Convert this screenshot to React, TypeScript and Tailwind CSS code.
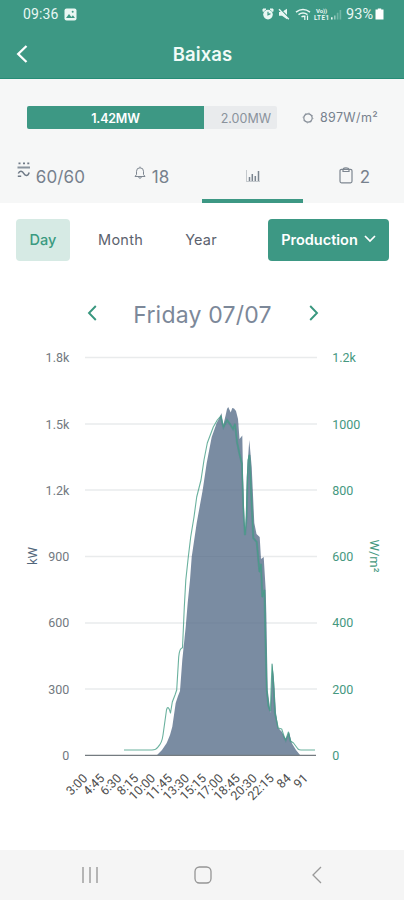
import React from "react";

const AREA =
  "M157 755 L162 750 L166.7 743 L170 735 L172.3 726.7 L175.7 703 L178 696 L180 691 L182.3 660 L185.7 627 L187.7 603 L190 580 L191.7 557 L196.7 523 L202.7 490 L206.7 463 L211.7 437 L216.7 423 L220 417 L221.4 413 L223.3 425 L225.7 415 L227 409 L228.2 407 L230.7 412.5 L232.3 408 L234 408.5 L236 411 L238 419 L239.5 439 L242.3 435.5 L243 473 L244.5 521 L245.4 530 L246.7 477 L249.3 440 L251.7 467 L254.3 523 L256.5 534 L259.7 537 L261 559 L263.7 557 L265.7 590 L266.3 613 L267.7 690 L270.5 713 L272.3 663 L274 680 L276 713 L278.3 728 L281.7 731.7 L285.7 739 L289 732 L291.7 743 L296 750 L300 755 Z";

const IRRADIANCE =
  "M124 750 H152 Q156 750 158 747 Q162 743 163 735 L166.5 710 Q168 704 170.5 713 L172.3 702 L175 695 L176.7 690 L178.7 657 Q179.5 648 182.5 647.7 L183.3 630 L184.3 607 L185.8 580 L188.3 557 L190.7 537 L194 517 L196.7 497 L201 480 L204 460 L207.3 443 L213.3 427 L217.3 420 L220.7 416 L223.5 427 L227 420 L230 424 L233 429 L235 424 L237 442 L239.5 454 L242 464 L243.3 505 L245 535 L246.5 517 L248 460 L249.5 455 L251.5 500 L253.3 538 L256.7 542 L259.5 572 L261 564 L262.3 597 L264.5 590 L265.5 640 L266.8 690 L268.5 706 L270.3 711 L272 664 L273.4 680 L275 713 L278.3 728 L281.7 729 L284.3 737 L285.7 740 L288.4 732 L290.5 741 L293.5 743 L298 749 Q299 750 301 750 H315";

const GRID_Y = [357.5, 424, 490, 556.5, 623, 689];
const LEFT_TICKS = ["1.8k", "1.5k", "1.2k", "900", "600", "300", "0"];
const RIGHT_TICKS = ["1.2k", "1000", "800", "600", "400", "200", "0"];
const TIMES = ["3:00", "4:45", "6:30", "8:15", "10:00", "11:45", "13:30", "15:15", "17:00", "18:45", "20:30", "22:15", "84", "91"];

function ProductionChart() {
  return (
    <svg viewBox="0 340 404 510" className="block h-[510px] w-full font-[Roboto,sans-serif]" fontSize="12.5">
      <clipPath id="production-area">
        <path d={AREA} />
      </clipPath>
      {GRID_Y.map((y) => (
        <line key={y} x1="85" x2="317" y1={y} y2={y} stroke="#e9ebec" strokeWidth="1.3" />
      ))}
      <path d={AREA} fill="#7a8ca2" />
      <g clipPath="url(#production-area)">
        {GRID_Y.map((y) => (
          <line key={y} x1="85" x2="317" y1={y} y2={y} stroke="#6f8097" strokeWidth="1" opacity="0.45" />
        ))}
        <path d={IRRADIANCE} fill="none" stroke="#4a8f8c" strokeWidth="2.2" opacity="0.5" />
      </g>
      <path d={IRRADIANCE} fill="none" stroke="#459d86" strokeWidth="1.1" strokeLinejoin="round" opacity="0.8" />
      <line x1="85" x2="316" y1="755.3" y2="755.3" stroke="#747b80" strokeWidth="1.3" />
      {LEFT_TICKS.map((t, i) => (
        <text key={t} x="69.3" y={362.3 + i * 66.25} textAnchor="end" fill="#727980">{t}</text>
      ))}
      {RIGHT_TICKS.map((t, i) => (
        <text key={t} x="332.2" y={362.3 + i * 66.25} fill="#459880">{t}</text>
      ))}
      <text transform="translate(36.5 556) rotate(-90)" textAnchor="middle" fontSize="13" fill="#52677b">kW</text>
      <text transform="translate(369.5 556) rotate(90)" textAnchor="middle" fontSize="13" fill="#459880">W/m²</text>
      {TIMES.map((t, i) => (
        <text key={t} transform={`translate(${88.3 + i * 16.95} 779) rotate(-45)`} textAnchor="end" fill="#4d4d4d">{t}</text>
      ))}
    </svg>
  );
}

function StatusIcons() {
  return (
    <svg viewBox="0 0 82 16" className="h-4 w-[82px]" fill="#e9f7f3">
      <circle cx="6" cy="8.6" r="4.8" />
      <path d="M1 5.5V3h3zM11 5.5V3H8z" stroke="#e9f7f3" />
      <path d="M6 5.8v3l2.4-1.2" fill="none" stroke="#3d9884" strokeWidth="1.2" />
      <path d="M17 6h2.8L25 2.8v10.4l-5-3.4h-3z" />
      <path d="M17.5 2.5l10.3 10.3" stroke="#3d9884" strokeWidth="1.4" />
      <path d="M17 3.3l9.8 10" stroke="#e9f7f3" strokeWidth="1.4" />
      <g fill="none" stroke="#e9f7f3" strokeWidth="1.5">
        <path d="M34 6.2q7-5.3 14 0M36.5 8.7q4.5-3.2 9 0M39.5 11q1.8-1.3 3.6 0" />
        <path d="M42.8 9.5v4.5M45.5 9.5v4.5" strokeWidth="1.2" />
      </g>
      <text x="54" y="7.3" fontSize="6" fontWeight="bold" textLength="11">Vo))</text>
      <text x="52" y="13.5" fontSize="6.3" fontWeight="bold" textLength="15">LTE1</text>
      <path d="M69 11.3h1.6v2.2H69z" />
      <path d="M72 9.5h1.6v4H72z" opacity="0.5" />
      <path d="M74.8 6.8h1.6v6.7h-1.6zM77.6 4h1.6v9.5h-1.6z" opacity="0.3" />
    </svg>
  );
}

function Header() {
  return (
    <header className="h-[79px] border-b border-[#258c76] bg-[#3d9884] text-white">
      <div className="flex h-7 items-center pl-[23px] pr-5 font-[Roboto,sans-serif] text-[#e9f7f3]">
        <span className="w-[41px] text-[14px] tracking-[0.1px]">09:36</span>
        <svg viewBox="0 0 13 13" className="h-[13px] w-[13px]">
          <rect x="0.5" y="0.5" width="12" height="12" rx="2" fill="#e9f7f3" />
          <path d="M2 10l3-4 2.4 3 1.5-1.7L11 10z" fill="#3d9884" />
          <circle cx="8.7" cy="3.8" r="1" fill="#3d9884" />
        </svg>
        <div className="ml-auto flex items-center">
          <StatusIcons />
          <span className="ml-[2px] pt-px text-[14.5px] leading-5">93%</span>
          <svg viewBox="0 0 9 12" className="ml-[2px] h-[12px] w-[9px]" fill="#ffffff">
            <path d="M2.8 0.5h3.4V1.5H8.5v10H.5v-10h2.3z" />
          </svg>
        </div>
      </div>
      <div className="grid h-[50px] grid-cols-[60px_1fr_60px] items-center">
        <svg viewBox="0 0 12 18" className="ml-4 mt-0.5 h-[18px] w-3" fill="none" stroke="#ffffff" strokeWidth="2.3">
          <path d="M10.5 1L2.2 9l8.3 8" />
        </svg>
        <h1 className="pl-px pt-px text-center text-[18.5px] font-semibold leading-6 tracking-[0.1px] text-[#f1fbf8]">Baixas</h1>
      </div>
    </header>
  );
}

function Summary() {
  return (
    <section className="h-[124px] bg-[#f6f7f7] text-[#77818d]">
      <div className="flex h-[77px] items-center pl-[27px]">
        <div className="flex h-[23px] w-[250px] overflow-hidden rounded-[2px] bg-[#e9ebed] text-[12.5px] leading-[25px]">
          <div className="w-[177px] bg-[#3d9884] text-center font-semibold tracking-[-0.2px] text-white">1.42MW</div>
          <div className="flex-1 pr-[6px] text-right text-[#8a929c]">2.00MW</div>
        </div>
        <svg viewBox="0 0 12 12" className="ml-[25px] h-3 w-3" fill="none" stroke="#858d97">
          <circle cx="6" cy="6" r="4.2" strokeWidth="1.2" />
          <circle cx="6" cy="6" r="5" strokeWidth="0.8" strokeDasharray="1 2.93" />
        </svg>
        <span className="ml-[6px] pt-[2px] text-[12.5px] tracking-[0.35px]">897W/m²</span>
      </div>
      <nav className="grid h-[47px] grid-cols-4 text-[17px] tracking-[0.15px]">
        <div className="flex justify-center pl-px pt-[7px]">
          <svg viewBox="0 0 13 16" className="-mt-px mr-[6px] h-4 w-[13px]" fill="none" stroke="#6f7a87">
            <path d="M1.5 1.4h2M6 1.4h2M10.3 1.4h2" strokeWidth="1.6" />
            <path d="M0.5 5.5h12.5" strokeWidth="2" opacity="0.8" />
            <path d="M1.3 11.5C2.8 8 5.4 9 6.7 11.4S10.6 15 12.2 10.5M0.8 14.2h3.4" strokeWidth="1.5" />
          </svg>
          <span className="h-6 leading-[28px]">60/60</span>
        </div>
        <div className="flex justify-center pt-[7px]">
          <svg viewBox="0 0 12 14" className="mr-[6px] mt-[3px] h-[14px] w-3" fill="none" stroke="#7e8791" strokeWidth="1">
            <path d="M1 10.5h10L9.5 8.5V5.3a3.5 3.5 0 0 0-7 0v3.2zM4.7 11c.2 1.8 2.4 1.8 2.6 0M6 1.7V.6" />
          </svg>
          <span className="h-6 leading-[28px]">18</span>
        </div>
        <div className="flex justify-center border-b-4 border-[#3d9884] pt-[13px]">
          <svg viewBox="0 0 16 14" className="h-[14px] w-4" fill="none" stroke="#7b858f">
            <path d="M1.5 1v11.5H15" strokeWidth="0.8" opacity="0.5" />
            <path d="M4.5 12V8M7.3 12V5M10.3 12V7M13.5 12V2" strokeWidth="1.5" />
          </svg>
        </div>
        <div className="flex justify-center pl-[2px] pt-[7px]">
          <svg viewBox="0 0 14 17" className="mr-[7px] mt-[4px] h-[17px] w-[14px]" fill="none" stroke="#7e8791" strokeWidth="1.2">
            <rect x="1" y="2.3" width="12" height="13.5" rx="1.5" />
            <path d="M4 2.2V4.5h6V2.2M4.4 2c0-1.5 5.2-1.5 5.2 0" />
          </svg>
          <span className="h-6 leading-[28px]">2</span>
        </div>
      </nav>
    </section>
  );
}

function PeriodPicker() {
  return (
    <section className="h-[137px]">
      <div className="flex items-center pl-4 pr-[15px] pt-4 text-[14.5px] text-[#5c626e]">
        <button className="h-[42px] w-[54px] rounded bg-[#d6eae4] font-medium text-[#3a9a80]">Day</button>
        <button className="ml-[27px] w-[47px] whitespace-nowrap tracking-[0.25px]">Month</button>
        <button className="ml-[41px] w-8 tracking-[0.15px]">Year</button>
        <button className="ml-auto flex h-[42px] w-[121px] items-center justify-center gap-[6px] rounded-[4px] bg-[#3d9884] font-semibold text-white">
          Production
          <svg viewBox="0 0 12 8" className="-mt-0.5 h-2 w-3" fill="none" stroke="#ffffff" strokeWidth="1.7">
            <path d="M1 1l5 5 5-5" />
          </svg>
        </button>
      </div>
      <div className="flex items-center justify-between pl-[87px] pr-[85px] pt-[36px] text-[#39977f]">
        <svg viewBox="0 0 10 16" className="h-4 w-[10px]" fill="none" stroke="currentColor" strokeWidth="1.9">
          <path d="M8.8 1L2 8l6.8 7" />
        </svg>
        <h2 className="-ml-px h-8 whitespace-nowrap text-[23px] leading-[37px] tracking-[0.2px] text-[#7c8899]">Friday 07/07</h2>
        <svg viewBox="0 0 10 16" className="h-4 w-[10px]" fill="none" stroke="currentColor" strokeWidth="1.9">
          <path d="M1.2 1L8 8l-6.8 7" />
        </svg>
      </div>
    </section>
  );
}

function SystemNav() {
  return (
    <footer className="grid h-[50px] grid-cols-3 place-items-center bg-[#f5f5f5] px-[33px]">
      <svg viewBox="0 0 16 18" className="ml-px h-[18px] w-4" stroke="#9b9b9b" strokeWidth="1.4">
        <path d="M1 1v16M8 1v16M15 1v16" />
      </svg>
      <svg viewBox="0 0 18 18" className="ml-[3px] h-[18px] w-[18px]" fill="none" stroke="#959595" strokeWidth="1.3">
        <rect x="1" y="1" width="16" height="16" rx="4.5" />
      </svg>
      <svg viewBox="0 0 10 18" className="ml-[5px] h-[18px] w-[10px]" fill="none" stroke="#999999" strokeWidth="1.3">
        <path d="M9 1L1 9l8 8" />
      </svg>
    </footer>
  );
}

export default function App() {
  return (
    <main className="h-[900px] w-[404px] overflow-hidden bg-white font-[Inter,sans-serif]">
      <Header />
      <Summary />
      <PeriodPicker />
      <ProductionChart />
      <SystemNav />
    </main>
  );
}
